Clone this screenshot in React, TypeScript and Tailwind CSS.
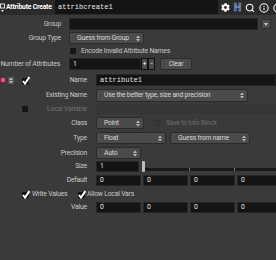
import { Search, Info, CircleHelp } from "lucide-react";
import { FaCog } from "react-icons/fa";

function Spinner() {
  return (
    <svg width="4" height="7" viewBox="0 0 4 7" className="shrink-0">
      <path d="M0 3 L2 0.5 L4 3 Z" fill="#bdbdbd" />
      <path d="M0 4 L2 6.5 L4 4 Z" fill="#bdbdbd" />
    </svg>
  );
}

function Menu({ label, className }: { label: string; className: string }) {
  return (
    <div
      className={
        "flex items-center h-full rounded-[2px] bg-[#4b4b4b] border border-[#2a2a2a] text-[#d8d8d8] pl-[7px] pr-[3px] " +
        className
      }
    >
      <span className="flex-1 whitespace-nowrap overflow-hidden">{label}</span>
      <Spinner />
    </div>
  );
}

function Field({ value, className, mono }: { value: string; className: string; mono?: boolean }) {
  return (
    <div
      className={
        "flex items-center h-full bg-[#141414] border border-[#262626] pl-[3px] text-[#e2e2e2] " +
        (mono ? "font-['Liberation_Mono',monospace] text-[7px] tracking-normal " : "") +
        className
      }
    >
      {value}
    </div>
  );
}

function Check() {
  return (
    <svg width="8" height="9" viewBox="0 0 8 9" className="shrink-0">
      <rect x="0" y="2" width="6.5" height="6.5" fill="#111" />
      <path d="M1 5 L3 7.6 L7.4 1" stroke="#fff" strokeWidth="2" fill="none" />
    </svg>
  );
}

function Box() {
  return <div className="w-[6px] h-[6px] bg-[#161616] shrink-0" />;
}

function Vec({ value }: { value: string }) {
  return (
    <div className="flex gap-[2px] h-full">
      <Field value={value} className="w-[45px] shrink-0" />
      <Field value={value} className="w-[45px] shrink-0" />
      <Field value={value} className="w-[45px] shrink-0" />
      <Field value={value} className="w-[45px] shrink-0" />
    </div>
  );
}

function TopLabel({ children }: { children: string }) {
  return <div className="w-[61px] text-right shrink-0 mr-[8px] whitespace-nowrap">{children}</div>;
}

function InstLabel({ children, dim }: { children: string; dim?: boolean }) {
  return (
    <div className={"w-[57px] text-right shrink-0 mr-[9px] whitespace-nowrap " + (dim ? "text-[#707070]" : "")}>
      {children}
    </div>
  );
}

export default function App() {
  return (
    <div className="w-[276px] h-[260px] overflow-hidden bg-[#3a3a3a] font-['Roboto',sans-serif] text-[6.8px] tracking-[-0.2px] leading-none text-[#c9c9c9]">
      {/* header */}
      <div className="flex items-center h-[15px] bg-[#2a2a2a]">
        <svg width="6" height="12" viewBox="0 0 6 12" className="shrink-0">
          <rect x="0.5" y="2" width="4" height="4" fill="none" stroke="#e0e0e0" strokeWidth="1" />
          <path d="M1 8 L4 8 L2.5 10 Z" fill="#e0e0e0" />
        </svg>
        <div className="w-[49px] font-bold text-white shrink-0 whitespace-nowrap">Attribute Create</div>
        <div className="flex items-center self-start h-[14px] w-[163px] bg-[#141414] pl-[3px] font-['Liberation_Mono',monospace] text-[7px] tracking-normal text-[#e8e8e8] shrink-0">
          attribcreate1
        </div>
        <div className="flex items-center gap-[4px] ml-[3px] text-white shrink-0">
          <FaCog size={9} />
          <span className="font-bold text-[10px] text-[#1d3d66] [-webkit-text-stroke:0.6px_#8fb4e6]">H</span>
          <Search size={10} strokeWidth={2.5} />
          <Info size={10} strokeWidth={2.5} />
          <CircleHelp size={10} strokeWidth={2.5} />
        </div>
      </div>

      {/* Group */}
      <div className="flex items-center h-[12px] mt-[3px]">
        <TopLabel>Group</TopLabel>
        <Field value="" className="w-[189px]" />
        <div className="flex items-center justify-center w-[10px] h-[10px] ml-[3px] bg-[#4b4b4b] border border-[#2a2a2a] rounded-[1px]">
          <svg width="4" height="3" viewBox="0 0 4 3">
            <path d="M0 0 L4 0 L2 3 Z" fill="#cfcfcf" />
          </svg>
        </div>
      </div>

      {/* Group Type */}
      <div className="flex items-center h-[12px] mt-[2px]">
        <TopLabel>Group Type</TopLabel>
        <Menu label="Guess from Group" className="w-[75px]" />
      </div>

      {/* Encode */}
      <div className="flex items-center h-[10px] mt-[2px] pl-[70px]">
        <Box />
        <span className="ml-[5px] whitespace-nowrap">Encode Invalid Attribute Names</span>
      </div>

      {/* Number of Attributes */}
      <div className="flex items-center h-[12px] mt-[2px]">
        <div className="w-[60px] text-right shrink-0 mr-[9px] whitespace-nowrap">Number of Attributes</div>
        <Field value="1" className="w-[72px]" />
        <div className="flex items-center justify-center w-[7px] h-full bg-[#4b4b4b] border border-[#111] text-white">+</div>
        <div className="flex items-center justify-center w-[7px] h-full bg-[#4b4b4b] border border-[#111] text-white">-</div>
        <div className="flex items-center justify-center w-[32px] h-full ml-[5px] bg-[#4b4b4b] border border-[#2a2a2a] rounded-[2px] text-[#d8d8d8]">
          Clear
        </div>
      </div>

      {/* Name */}
      <div className="flex items-center h-[12px] mt-[4px]">
        <div className="flex items-center w-[30px] shrink-0">
          <div className="w-[6px] h-[6px] bg-[#c9607a] border border-[#6b2a3a]" />
          <div className="flex items-center justify-center w-[6px] h-[7px] ml-[2px] bg-[#555]">
            <Spinner />
          </div>
          <div className="ml-[8px]">
            <Check />
          </div>
        </div>
        <InstLabel>Name</InstLabel>
        <Field value="attribute1" mono className="flex-1" />
      </div>

      {/* Existing Name */}
      <div className="flex items-center h-[13px] mt-[3px]">
        <div className="w-[30px] shrink-0" />
        <InstLabel>Existing Name</InstLabel>
        <Menu label="Use the better type, size and precision" className="w-[152px]" />
      </div>

      {/* Local Variable */}
      <div className="flex items-center h-[10px] mt-[2px]">
        <div className="w-[30px] shrink-0 pl-[22px]">
          <Box />
        </div>
        <InstLabel dim>Local Variable</InstLabel>
        <div className="flex-1 h-full bg-[#363636]" />
      </div>

      {/* Class */}
      <div className="flex items-center h-[12px] mt-[3px]">
        <div className="w-[30px] shrink-0" />
        <InstLabel>Class</InstLabel>
        <Menu label="Point" className="w-[48px]" />
        <div className="w-[7px] h-[7px] ml-[9px] bg-[#363636] border border-[#333]" />
        <span className="ml-[6px] text-[#6e6e6e] whitespace-nowrap">Save to Info Block</span>
      </div>

      {/* Type */}
      <div className="flex items-center h-[12px] mt-[3px]">
        <div className="w-[30px] shrink-0" />
        <InstLabel>Type</InstLabel>
        <Menu label="Float" className="w-[70px]" />
        <Menu label="Guess from name" className="w-[80px] ml-[4px]" />
      </div>

      {/* Precision */}
      <div className="flex items-center h-[12px] mt-[3px]">
        <div className="w-[30px] shrink-0" />
        <InstLabel>Precision</InstLabel>
        <Menu label="Auto" className="w-[45px]" />
      </div>

      {/* Size */}
      <div className="flex items-center h-[11px] mt-[2px]">
        <div className="w-[30px] shrink-0" />
        <InstLabel>Size</InstLabel>
        <Field value="1" className="w-[43px]" />
        <div className="relative flex-1 h-full ml-[3px]">
          <div className="absolute left-0 right-0 top-[7px] h-[3px] bg-[#1a1a1a]" />
          <div className="absolute left-[47px] top-[7px] w-[1px] h-[3px] bg-[#777]" />
          <div className="absolute left-[92px] top-[7px] w-[1px] h-[3px] bg-[#777]" />
          <div className="absolute left-0 top-0 w-[3px] h-full bg-[#bdbdbd] rounded-[1px]" />
        </div>
      </div>

      {/* Default */}
      <div className="flex items-center h-[11px] mt-[3px]">
        <div className="w-[30px] shrink-0" />
        <InstLabel>Default</InstLabel>
        <Vec value="0" />
      </div>

      {/* Write Values / Allow Local Vars */}
      <div className="flex items-center h-[11px] mt-[3px] pl-[22px]">
        <Check />
        <span className="w-[46px] ml-[2px] shrink-0 whitespace-nowrap">Write Values</span>
        <Check />
        <span className="ml-[1px] whitespace-nowrap">Allow Local Vars</span>
      </div>

      {/* Value */}
      <div className="flex items-center h-[11px] mt-[2px]">
        <div className="w-[30px] shrink-0" />
        <InstLabel>Value</InstLabel>
        <Vec value="0" />
      </div>
    </div>
  );
}
